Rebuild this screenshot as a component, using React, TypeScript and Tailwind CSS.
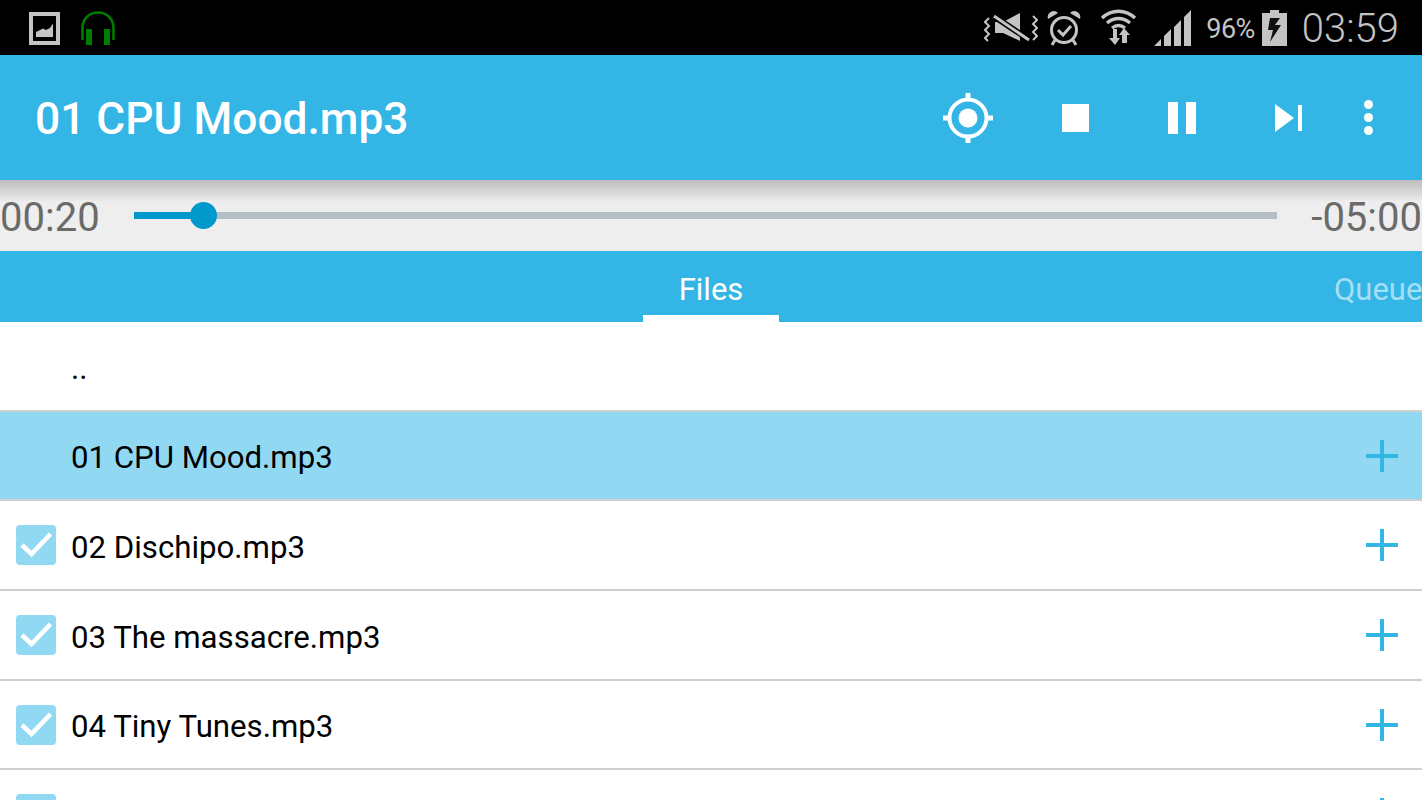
const files = [
  { name: "..", check: false, active: false, plus: false },
  { name: "01 CPU Mood.mp3", check: false, active: true, plus: true },
  { name: "02 Dischipo.mp3", check: true, active: false, plus: true },
  { name: "03 The massacre.mp3", check: true, active: false, plus: true },
  { name: "04 Tiny Tunes.mp3", check: true, active: false, plus: true },
  { name: "", check: true, active: false, plus: true },
];

function StatusLeft() {
  return (
    <div className="flex items-center pl-[29px] gap-[21px]">
      <svg width="31" height="34" viewBox="0 0 31 34" className="text-[#c4c4c4]">
        <path fill="currentColor" fillRule="evenodd" d="M0 1h31v33H0z M4 5v25h23V5z" />
        <path fill="currentColor" d="M7 26v-5l7-3.5 3 1.5 4-2 3-4.5v13.5z" />
      </svg>
      <svg width="34" height="34" viewBox="0 0 34 34" className="text-[#007c00]">
        <path fill="none" stroke="currentColor" strokeWidth="2.6" d="M1.5 29V17C1.5 8 8 1.5 17 1.5S32.5 8 32.5 17v12" />
        <path fill="currentColor" d="M5 18h6v16H5z M23 18h6v16h-6z" />
      </svg>
    </div>
  );
}

function StatusRight() {
  return (
    <div className="flex items-center pr-[23px] text-[#c4c4c4]">
      <svg width="54" height="34" viewBox="0 0 54 34" className="mr-[9px]">
        <path fill="currentColor" d="M11 11h8L36 2v28L19 22h-8z" />
        <path stroke="#000" strokeWidth="6" d="M8 4l39 26" />
        <path stroke="currentColor" strokeWidth="3" d="M10 5l35 24" />
        <path fill="none" stroke="currentColor" strokeWidth="2" d="M5 7L1 11l4 4-4 4 4 4-4 4 3 3 M49 5l4 4-4 4 4 4-4 4 4 4-4 4" />
      </svg>
      <svg width="34" height="36" viewBox="0 0 34 36" className="mr-[19px]">
        <circle cx="17" cy="20" r="12.5" fill="none" stroke="currentColor" strokeWidth="3" />
        <path fill="none" stroke="currentColor" strokeWidth="3" d="M11 20l5 5 8-9" />
        <path fill="currentColor" d="M1 9a6 6 0 0 1 10-6z M33 9a6 6 0 0 0-10-6z" />
        <path stroke="currentColor" strokeWidth="3" d="M8 30l-3 5 M26 30l3 5" />
      </svg>
      <svg width="37" height="37" viewBox="0 0 37 37" className="mr-[17px]">
        <path fill="none" stroke="currentColor" strokeWidth="3.4" d="M2 9c10-9 23-9 33 0 M7 14c7-6 16-6 23 0 M12 19c4-3 9-3 13 0" />
        <path fill="currentColor" d="M13 20h4v9h3l-5 7-6-7h4z M24 19l6 7h-3v8h-5v-8h-3z" />
      </svg>
      <svg width="37" height="36" viewBox="0 0 37 36" className="mr-[15px]">
        <path fill="currentColor" d="M0 36l7-7v7z M10 36V26l7-7v17z M20 36V17l7-7v26z M30 36V7l7-7v36z" />
      </svg>
      <span className="text-[27px] leading-none mr-[7px] tracking-[-0.5px] pt-[3px]">96%</span>
      <svg width="25" height="36" viewBox="0 0 25 36" className="mr-[15px]">
        <path fill="currentColor" d="M8 0h9v3h8v33H0V3h8z" />
        <path fill="#111" d="M15 8h-7l-2 12h5l-3 12 11-17h-6l5-7z" />
      </svg>
      <span className="text-[40px] leading-none font-light pt-[3px]">03:59</span>
    </div>
  );
}

function ToolbarIcons() {
  return (
    <div className="flex items-center text-white">
      <svg width="50" height="50" viewBox="0 0 50 50" className="mr-[69px]">
        <circle cx="25" cy="25" r="18.5" fill="none" stroke="currentColor" strokeWidth="4" />
        <circle cx="25" cy="25" r="9.5" fill="currentColor" />
        <path fill="currentColor" d="M22.5 0h5v7h-5z M22.5 43h5v7h-5z M0 22.5h7v5H0z M43 22.5h7v5h-7z" />
      </svg>
      <div className="w-[27px] h-[28px] bg-white mr-[79px]" />
      <div className="flex gap-[8px] mr-[79px]">
        <div className="w-[10px] h-[32px] bg-white" />
        <div className="w-[10px] h-[32px] bg-white" />
      </div>
      <svg width="27" height="28" viewBox="0 0 27 28" className="mr-[62px]">
        <path fill="currentColor" d="M0 0l19 14L0 28z M23 1h4v26h-4z" />
      </svg>
      <div className="flex flex-col gap-[4px] mr-[49px]">
        <div className="w-[9px] h-[9px] rounded-full bg-white" />
        <div className="w-[9px] h-[9px] rounded-full bg-white" />
        <div className="w-[9px] h-[9px] rounded-full bg-white" />
      </div>
    </div>
  );
}

function Row({ name, check, active, plus }: { name: string; check: boolean; active: boolean; plus: boolean }) {
  return (
    <div className={`h-[89.7px] shrink-0 flex items-center border-b-2 border-[#cfcfcf] ${active ? "bg-[#91d9f2]" : "bg-white"}`}>
      <div className="w-[71px] pl-[16px] shrink-0">
        {check && (
          <div className="w-[40px] h-[40px] rounded-[4px] bg-[#91d9f2] flex items-center justify-center">
            <svg width="32" height="26" viewBox="0 0 32 26">
              <path fill="none" stroke="#fff" strokeWidth="4.5" d="M2 13l9.5 9L30.5 2" />
            </svg>
          </div>
        )}
      </div>
      <span className="flex-1 pt-[5px] text-[31.2px] leading-none text-black">{name}</span>
      {plus && (
        <svg width="32" height="32" viewBox="0 0 32 32" className="mr-[24px]">
          <path fill="#33b5e5" d="M14 0h4v32h-4z M0 14h32v4H0z" />
        </svg>
      )}
    </div>
  );
}

export default function App() {
  return (
    <div className="w-[1422px] h-[800px] overflow-hidden flex flex-col bg-white font-['Roboto',sans-serif]">
      <div className="h-[55px] shrink-0 bg-black flex items-center justify-between">
        <StatusLeft />
        <StatusRight />
      </div>

      <div className="h-[125px] shrink-0 bg-[#33b5e5] flex items-center justify-between">
        <span className="pl-[35px] pt-[4px] text-[44.3px] leading-none font-medium text-white">01 CPU Mood.mp3</span>
        <ToolbarIcons />
      </div>

      <div className="relative h-[71px] shrink-0 bg-[#eeeeee] flex items-center justify-between text-[#6a6a6a] text-[40px] leading-none overflow-hidden">
        <div className="absolute left-0 right-0 top-0 h-[22px] bg-gradient-to-b from-[#bdbdbd] to-[#eeeeee]" />
        <span className="relative w-[134px] pt-[5px] shrink-0">00:20</span>
        <div className="relative flex-1 h-[7px] bg-[#b4bfc4]">
          <div className="absolute left-0 top-0 h-full w-[69px] bg-[#0099cc]" />
          <div className="absolute left-[56px] top-[-10px] w-[27px] h-[27px] rounded-full bg-[#0099cc]" />
        </div>
        <span className="relative w-[145px] pt-[5px] shrink-0 text-right whitespace-nowrap">-05:00</span>
      </div>

      <div className="relative h-[71px] shrink-0 bg-[#33b5e5] flex items-center justify-center">
        <span className="pt-[6px] text-[31px] leading-none text-white">Files</span>
        <div className="absolute left-[643px] bottom-0 w-[136px] h-[7px] bg-white" />
        <span className="absolute left-[1334px] top-[23px] text-[31px] leading-none text-[#a5dff5]">Queue</span>
      </div>

      {files.map((f, i) => (
        <Row key={i} {...f} />
      ))}
    </div>
  );
}
